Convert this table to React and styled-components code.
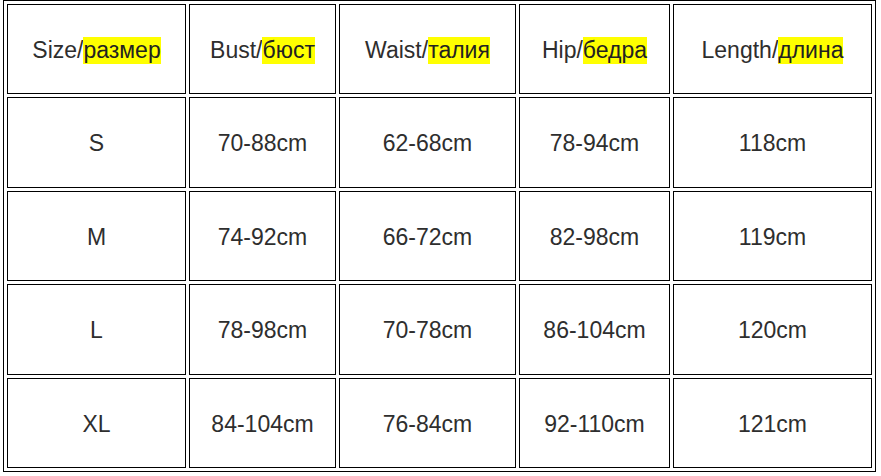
import React from "react";
import styled, { createGlobalStyle } from "styled-components";

const Global = createGlobalStyle`
  html, body { margin: 0; padding: 0; background: #fff; }
  body { font-family: "Liberation Sans", Arial, sans-serif; }
`;

const Page = styled.div`
  padding-left: 3px;
`;

const Table = styled.div`
  display: grid;
  grid-template-columns: 179px 147px 177px 151px 199px;
  grid-template-rows: 90px 91px 90px 91px 90px;
  gap: 3px;
  padding: 3px;
  border: 1px solid #000;
  width: max-content;
`;

const Cell = styled.div`
  box-sizing: border-box;
  border: 1px solid #000;
  display: flex;
  align-items: center;
  justify-content: center;
  padding-top: 2px;
  font-size: 23px;
  color: #2e2e2e;
  white-space: nowrap;
`;

const Mark = styled.span`
  background: #ffff00;
  color: #222;
`;

const headers = [
  ["Size/", "размер"],
  ["Bust/", "бюст"],
  ["Waist/", "талия"],
  ["Hip/", "бедра"],
  ["Length/", "длина"],
];

const rows = [
  ["S", "70-88cm", "62-68cm", "78-94cm", "118cm"],
  ["M", "74-92cm", "66-72cm", "82-98cm", "119cm"],
  ["L", "78-98cm", "70-78cm", "86-104cm", "120cm"],
  ["XL", "84-104cm", "76-84cm", "92-110cm", "121cm"],
];

export default function App() {
  return (
    <Page>
      <Global />
      <Table>
        {headers.map(([en, ru]) => (
          <Cell key={en}>
            {en}
            <Mark>{ru}</Mark>
          </Cell>
        ))}
        {rows.map((r) =>
          r.map((v, i) => <Cell key={r[0] + i}>{v}</Cell>)
        )}
      </Table>
    </Page>
  );
}
